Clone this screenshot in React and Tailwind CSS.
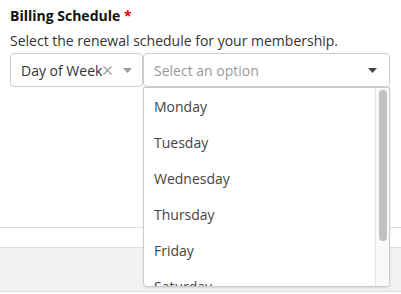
import React from 'react';

const days = ['Monday', 'Tuesday', 'Wednesday', 'Thursday', 'Friday', 'Saturday', 'Sunday'];

const Caret = ({ className }) => (
  <svg width="9" height="5" viewBox="0 0 9 5" className={className}>
    <path d="M0 0 L9 0 L4.5 5 Z" fill="currentColor" />
  </svg>
);

const App = () => {
  return (
    <div className="w-[401px] h-[294px] bg-white relative overflow-hidden font-['Open_Sans',sans-serif] text-[14px] text-[#333]">
      {/* form area */}
      <div className="h-[228px] border-b border-[#ddd] px-[10px] pt-[6px]">
        <div className="font-bold leading-5 text-[#111]">
          Billing Schedule <span className="text-[#e00]">*</span>
        </div>
        <div className="mt-[5px] leading-5 text-[#333]">Select the renewal schedule for your membership.</div>

        <div className="relative mt-[2px] flex">
          <div className="flex items-center w-[133px] h-[34px] border border-[#ccc] rounded-[4px] pl-[10px] pr-[10px]">
            <span className="text-[#333]">Day of Week</span>
            <svg width="9" height="9" viewBox="0 0 9 9" className="ml-[1px] text-[#999]">
              <path d="M0.5 0.5 L8.5 8.5 M8.5 0.5 L0.5 8.5" stroke="currentColor" strokeWidth="1.2" />
            </svg>
            <Caret className="ml-auto text-[#999]" />
          </div>
          <div className="flex items-center w-[247px] h-[34px] border border-[#ccc] rounded-[4px] pl-[10px] pr-[12px]">
            <span className="text-[#999]">Select an option</span>
            <Caret className="ml-auto text-[#444]" />
          </div>

          {/* open dropdown */}
          <div className="absolute left-[133px] top-[34px] w-[247px] h-[200px] bg-white border border-[#ccc] rounded-b-[4px] shadow-[0_1px_2px_rgba(0,0,0,0.12)] flex overflow-hidden z-10">
            <div className="flex-1 overflow-hidden">
              {days.map((d) => (
                <div key={d} className="h-[36px] flex items-center pl-[10px] text-[#444]">
                  {d}
                </div>
              ))}
            </div>
            <div className="w-[14px] bg-[#f9f9f9] border-l border-[#e6e6e6] pt-[2px] flex justify-center">
              <div className="w-[8px] h-[151px] rounded-full bg-[#c1c1c1]" />
            </div>
          </div>
        </div>
      </div>
      <div className="h-[20px] border-b border-[#ddd] bg-white" />
      <div className="h-[44px] border-b border-[#ddd] bg-[#f2f2f2]" />
    </div>
  );
};

export default App;
